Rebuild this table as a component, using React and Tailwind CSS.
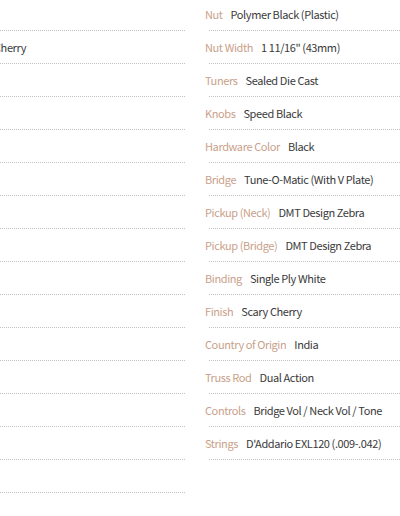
const specs = [
  ["Nut", "Polymer Black (Plastic)"],
  ["Nut Width", "1 11/16\" (43mm)"],
  ["Tuners", "Sealed Die Cast"],
  ["Knobs", "Speed Black"],
  ["Hardware Color", "Black"],
  ["Bridge", "Tune-O-Matic (With V Plate)"],
  ["Pickup (Neck)", "DMT Design Zebra"],
  ["Pickup (Bridge)", "DMT Design Zebra"],
  ["Binding", "Single Ply White"],
  ["Finish", "Scary Cherry"],
  ["Country of Origin", "India"],
  ["Truss Rod", "Dual Action"],
  ["Controls", "Bridge Vol / Neck Vol / Tone"],
  ["Strings", "D'Addario EXL120 (.009-.042)"],
];

// left column is scrolled off, only the tail of one value shows
const leftRows = Array.from({ length: 15 }, (_, i) => (i === 1 ? "Cherry" : null));

export default function App() {
  return (
    <div
      className="w-[400px] h-[516px] overflow-hidden bg-white text-[11px] tracking-[-0.4px]"
      style={{ fontFamily: '"Noto Sans CJK KR", "Noto Sans", sans-serif' }}
    >
      <div className="flex gap-5 -mt-[2px]">
        {/* Left column */}
        <div className="w-[185px] shrink-0 overflow-hidden">
          {leftRows.map((value, i) => (
            <div key={i} className="h-[33px] flex flex-col">
              <div className="flex-1 flex items-center whitespace-nowrap">
                {value && <span className="-ml-[6px] text-[#3a3a3a]">{value}</span>}
              </div>
              <div className="border-b border-dotted border-[#c2c2c2]" />
            </div>
          ))}
        </div>

        {/* Right column */}
        <div className="flex-1 min-w-0">
          {specs.map(([label, value]) => (
            <div key={label} className="h-[33px] flex flex-col">
              <div className="flex-1 flex items-center whitespace-nowrap">
                <span className="text-[#c99f8a]">{label}</span>
                <span className="ml-2 text-[#3a3a3a]">{value}</span>
              </div>
              <div className="ml-1 border-b border-dotted border-[#c2c2c2]" />
            </div>
          ))}
        </div>
      </div>
    </div>
  );
}
